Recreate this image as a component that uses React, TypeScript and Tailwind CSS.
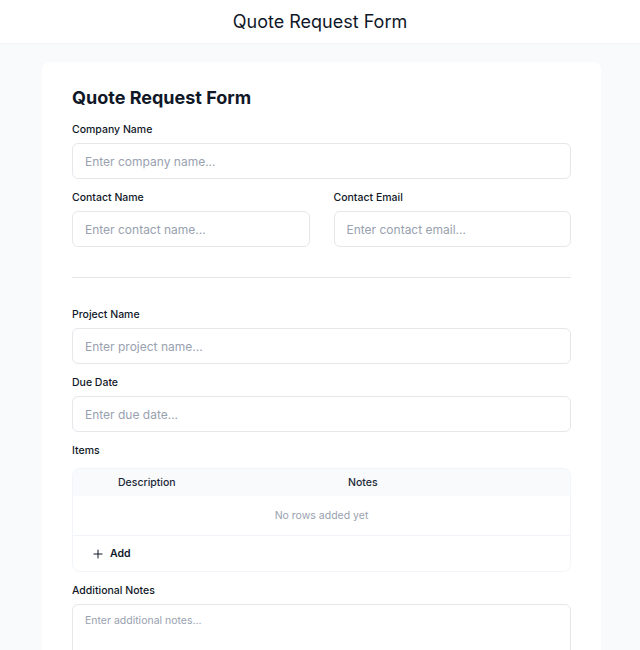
import { Plus } from "lucide-react";

type FieldProps = {
  label: string;
  placeholder: string;
};

function Field({ label, placeholder }: FieldProps) {
  return (
    <div className="flex flex-col">
      <label className="mb-[5px] text-[10.5px] font-medium leading-4 text-gray-900">{label}</label>
      <input
        type="text"
        placeholder={placeholder}
        className="h-9 w-full rounded-md border border-gray-200 bg-white px-3 text-xs text-gray-900 outline-none placeholder:text-gray-400"
      />
    </div>
  );
}

function ItemsTable() {
  return (
    <div className="flex flex-col">
      <label className="mb-[9px] text-[10.5px] font-medium leading-4 text-gray-900">Items</label>
      <div className="overflow-hidden rounded-lg border border-slate-100">
        <div className="grid h-[27px] grid-cols-[45px_230px_1fr] items-center bg-slate-50 text-[10.5px] font-medium text-gray-800">
          <div />
          <div>Description</div>
          <div>Notes</div>
        </div>
        <div className="flex h-10 items-center justify-center border-b border-slate-100 text-[10.5px] text-gray-400">
          No rows added yet
        </div>
        <div className="flex h-[35px] items-center px-[18px]">
          <button className="flex items-center gap-[5px] text-[10.5px] font-semibold text-gray-900">
            <Plus className="h-3.5 w-3.5" strokeWidth={1.75} />
            Add
          </button>
        </div>
      </div>
    </div>
  );
}

export default function App() {
  return (
    <div className="min-h-screen bg-slate-50 font-['Inter',sans-serif]">
      <header className="flex h-11 items-center justify-center border-b border-slate-100 bg-white">
        <h1 className="text-lg text-gray-900">Quote Request Form</h1>
      </header>

      <main className="pl-[42px] pr-[39px] pt-[18px]">
        <div className="rounded-lg bg-white px-[30px] pb-8 pt-[22px]">
          <h2 className="mb-2.5 text-lg font-bold leading-7 text-gray-900">Quote Request Form</h2>

          <div className="flex flex-col gap-[11px]">
            <Field label="Company Name" placeholder="Enter company name..." />
            <div className="grid grid-cols-2 gap-6">
              <Field label="Contact Name" placeholder="Enter contact name..." />
              <Field label="Contact Email" placeholder="Enter contact email..." />
            </div>
          </div>

          <hr className="mb-[29px] mt-[30px] border-t border-gray-200" />

          <div className="flex flex-col gap-[11px]">
            <Field label="Project Name" placeholder="Enter project name..." />
            <Field label="Due Date" placeholder="Enter due date..." />
            <ItemsTable />
            <div className="flex flex-col">
              <label className="mb-[5px] text-[10.5px] font-medium leading-4 text-gray-900">Additional Notes</label>
              <textarea
                rows={4}
                placeholder="Enter additional notes..."
                className="w-full resize-none rounded-md border border-gray-200 bg-white px-3 py-2 text-[10.5px] text-gray-900 outline-none placeholder:text-gray-400"
              />
            </div>
          </div>
        </div>
      </main>
    </div>
  );
}
